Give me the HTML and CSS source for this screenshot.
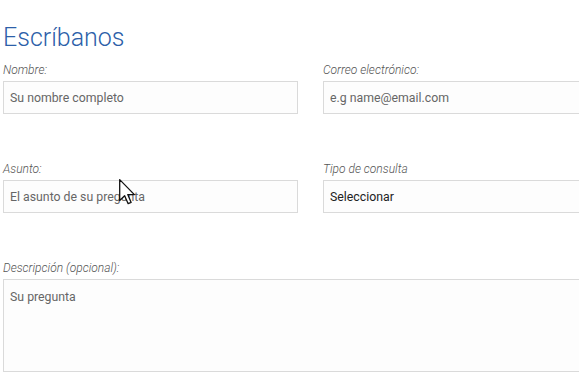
FILE: index.html
```html
<!DOCTYPE html>
<html lang="es">
<head>
<meta charset="utf-8">
<title>Escríbanos</title>
<link rel="stylesheet" href="styles.css">
</head>
<body>
<div class="page">
  <h1 class="title">Escríbanos</h1>
  <form class="form">
    <div class="row">
      <div class="group">
        <label class="label" for="nombre">Nombre:</label>
        <input class="field" id="nombre" type="text" placeholder="Su nombre completo">
      </div>
      <div class="group">
        <label class="label" for="correo">Correo electrónico:</label>
        <input class="field" id="correo" type="text" placeholder="e.g name@email.com">
      </div>
    </div>
    <div class="row">
      <div class="group">
        <label class="label" for="asunto">Asunto:</label>
        <input class="field" id="asunto" type="text" placeholder="El asunto de su pregunta">
      </div>
      <div class="group">
        <label class="label" for="tipo">Tipo de consulta</label>
        <select class="field select" id="tipo">
          <option>Seleccionar</option>
        </select>
      </div>
    </div>
    <div class="group full">
      <label class="label" for="desc">Descripción (opcional):</label>
      <textarea class="field area" id="desc" placeholder="Su pregunta"></textarea>
    </div>
  </form>
  <svg class="cursor" width="17" height="26" viewBox="0 0 13 20" aria-hidden="true">
    <path d="M0.5 0.5 L0.5 16.5 L4.3 12.9 L7 19 L9.3 18 L6.7 12 L11.8 12 Z" fill="#fff" stroke="#111" stroke-width="1" stroke-linejoin="round"/>
  </svg>
</div>
</body>
</html>
```
FILE: styles.css
```css
html, body {
  margin: 0;
  padding: 0;
  background: #ffffff;
  overflow: hidden;
}
body {
  font-family: Roboto, "Liberation Sans", sans-serif;
}
.page {
  position: relative;
  width: 615px;
  padding-left: 3px;
  padding-top: 22px;
}
.title {
  margin: 0 0 8px 0;
  font-size: 25px;
  line-height: 32px;
  font-weight: 300;
  color: #2d5fa9;
}
.form {
  margin: 0;
}
.row {
  display: grid;
  grid-template-columns: 295px 295px;
  column-gap: 25px;
}
.group {
  display: flex;
  flex-direction: column;
  margin-bottom: 47px;
}
.label {
  display: block;
  font-size: 12px;
  line-height: 16px;
  font-style: italic;
  font-weight: 300;
  color: #555555;
  margin-bottom: 3px;
}
.field {
  box-sizing: border-box;
  height: 33px;
  width: 100%;
  margin: 0;
  border: 1px solid #dadada;
  border-radius: 0;
  background: #fdfdfd;
  padding: 0 6px;
  font-family: Roboto, "Liberation Sans", sans-serif;
  font-size: 12.3px;
  color: #333;
  outline: none;
}
.field::placeholder {
  color: #666666;
  opacity: 1;
}
.select {
  -webkit-appearance: none;
  appearance: none;
  color: #222222;
}
.area {
  height: 93px;
  padding: 9px 6px;
  resize: none;
  line-height: 16px;
}
.cursor {
  position: absolute;
  left: 119px;
  top: 179px;
}
```
